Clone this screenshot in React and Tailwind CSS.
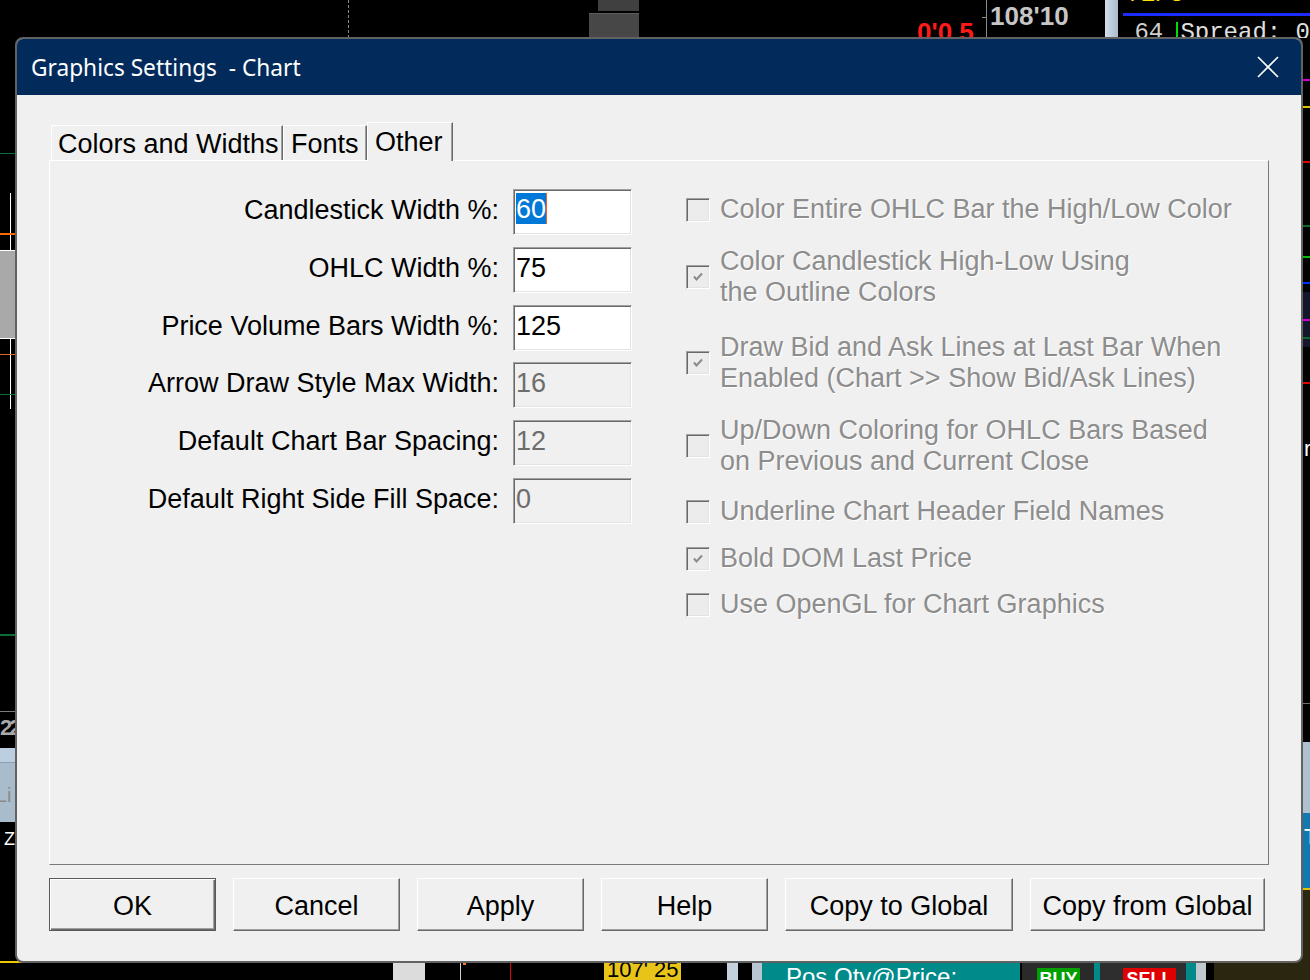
import React from "react";

const rows = [
  { label: "Candlestick Width %:", value: "60", enabled: true, selected: true, mt: "mt-0" },
  { label: "OHLC Width %:", value: "75", enabled: true, mt: "mt-[12px]" },
  { label: "Price Volume Bars Width %:", value: "125", enabled: true, mt: "mt-[12px]" },
  { label: "Arrow Draw Style Max Width:", value: "16", enabled: false, mt: "mt-[11px]" },
  { label: "Default Chart Bar Spacing:", value: "12", enabled: false, mt: "mt-[12px]" },
  { label: "Default Right Side Fill Space:", value: "0", enabled: false, mt: "mt-[12px]" },
];

const checks = [
  { lines: ["Color Entire OHLC Bar the High/Low Color"], checked: false, mt: "mt-0" },
  { lines: ["Color Candlestick High-Low Using", "the Outline Colors"], checked: true, mt: "mt-[21px]" },
  { lines: ["Draw Bid and Ask Lines at Last Bar When", "Enabled (Chart >> Show Bid/Ask Lines)"], checked: true, mt: "mt-[24px]" },
  { lines: ["Up/Down Coloring for OHLC Bars Based", "on Previous and Current Close"], checked: false, mt: "mt-[21px]" },
  { lines: ["Underline Chart Header Field Names"], checked: false, mt: "mt-[19px]" },
  { lines: ["Bold DOM Last Price"], checked: true, mt: "mt-[16px]" },
  { lines: ["Use OpenGL for Chart Graphics"], checked: false, mt: "mt-[15px]" },
];

const buttons = [
  { text: "OK", w: "w-[167px]", def: true },
  { text: "Cancel", w: "w-[167px]" },
  { text: "Apply", w: "w-[167px]" },
  { text: "Help", w: "w-[167px]" },
  { text: "Copy to Global", w: "w-[228px]" },
  { text: "Copy from Global", w: "w-[235px]" },
];

function TopStrip() {
  return (
    <div className="absolute left-0 top-0 w-[1310px] h-[38px] flex items-start overflow-hidden">
      <div className="ml-[348px] h-[38px] border-l border-dashed border-[#8a8a8a]" />
      <div className="ml-[240px] w-[50px] h-[38px] flex flex-col items-end">
        <div className="w-[41px] h-[11px] bg-[#404040]" />
        <div className="mt-[2px] w-[50px] flex-1 bg-[#474747] border-t border-[#5c5c5c]" />
      </div>
      <div className="ml-[278px] mt-[19px] w-[67px] text-[26px] font-bold leading-none text-[#ff1a1a] whitespace-nowrap">0'0.5</div>
      <div className="h-[38px] flex items-start">
        <div className="w-[4px] mt-[17px] h-[1px] bg-[#8a8a8a]" />
        <div className="h-[38px] border-l border-[#8a8a8a]" />
      </div>
      <div className="ml-[3px] mt-[3px] w-[118px] text-[26px] font-bold leading-none text-[#c6c6c6]">108'10</div>
      <div className="w-[14px] h-[38px] bg-gradient-to-r from-[#d3dee9] to-[#a9bccd]" />
      <div className="ml-[5px] flex-1 flex flex-col font-['Liberation_Mono',monospace] text-[24px] leading-none">
        <div className="h-[13px] overflow-hidden pl-[3px]">
          <div className="-mt-[17px] text-[#ffe000]">71/8</div>
        </div>
        <div className="h-[3px] bg-[#1a2cff]" />
        <div className="mt-[5px] flex items-start">
          <div className="ml-[11px] w-[42px] text-[#d0d0d0]">64</div>
          <div className="mt-[1px] w-[2px] h-[18px] bg-[#00e000]" />
          <div className="ml-[2px] text-[#e0e0e0] whitespace-pre">Spread: 0</div>
        </div>
      </div>
    </div>
  );
}

function LeftStrip() {
  return (
    <div className="absolute left-0 top-0 w-[26px] h-[980px] flex flex-col overflow-hidden">
      <div className="h-[153px] shrink-0" />
      <div className="h-[1px] shrink-0 bg-[#0b6e35]" />
      <div className="h-[39px] shrink-0" />
      <div className="h-[40px] shrink-0 w-[11px] border-r border-white" />
      <div className="h-[2px] shrink-0 bg-[#ff6a00]" />
      <div className="h-[15px] shrink-0 w-[11px] border-r border-white" />
      <div className="h-[89px] shrink-0 bg-[#a9a9a9] border-y border-white" />
      <div className="h-[15px] shrink-0 w-[11px] border-r border-white" />
      <div className="h-[1px] shrink-0 bg-[#e06a20]" />
      <div className="h-[39px] shrink-0 w-[11px] border-r border-white" />
      <div className="h-[1px] shrink-0 bg-[#0b6e35]" />
      <div className="h-[14px] shrink-0 w-[11px] border-r border-white" />
      <div className="h-[225px] shrink-0" />
      <div className="h-[2px] shrink-0 bg-[#0b6e35]" />
      <div className="h-[75px] shrink-0" />
      <div className="h-[1px] shrink-0 bg-[#7a7a7a]" />
      <div className="h-[36px] shrink-0 pt-[5px] text-[22px] font-bold leading-none text-[#a8a8a8] tracking-[-3px] whitespace-nowrap">22</div>
      <div className="h-[14px] shrink-0 bg-[#bccfe1]" />
      <div className="h-[1px] shrink-0 bg-[#8aa0b4]" />
      <div className="h-[59px] shrink-0 bg-[#a8bccc] pt-[22px] text-[20px] leading-none text-[#8a8a8a] -indent-[4px] whitespace-nowrap">Li</div>
      <div className="h-[139px] shrink-0 pt-[8px] pl-[4px] text-[18px] leading-none text-white">Z</div>
      <div className="h-[2px] shrink-0 bg-[#f0c800]" />
      <div className="flex-1" />
    </div>
  );
}

function RightStrip() {
  return (
    <div className="absolute right-0 top-0 w-[10px] h-[980px] flex flex-col overflow-hidden text-[22px] leading-none text-white">
      <div className="h-[79px] shrink-0" />
      <div className="h-[2px] shrink-0 bg-[#d000d0]" />
      <div className="h-[25px] shrink-0" />
      <div className="h-[2px] shrink-0 bg-[#e0c000]" />
      <div className="h-[53px] shrink-0" />
      <div className="h-[2px] shrink-0 bg-[#e00000]" />
      <div className="h-[62px] shrink-0" />
      <div className="h-[2px] shrink-0 bg-[#0a6a2a]" />
      <div className="h-[29px] shrink-0" />
      <div className="h-[2px] shrink-0 bg-[#00c000]" />
      <div className="h-[24px] shrink-0" />
      <div className="h-[2px] shrink-0 bg-[#0030ff]" />
      <div className="h-[8px] shrink-0" />
      <div className="h-[27px] shrink-0 bg-[#15152c]" />
      <div className="h-[2px] shrink-0 bg-[#d000d0]" />
      <div className="h-[16px] shrink-0 bg-[#15152c]" />
      <div className="h-[2px] shrink-0 bg-[#0a6a2a]" />
      <div className="h-[8px] shrink-0 bg-[#15152c]" />
      <div className="h-[35px] shrink-0" />
      <div className="h-[2px] shrink-0 bg-[#e00000]" />
      <div className="h-[319px] shrink-0 pt-[54px] pl-[4px]">r</div>
      <div className="h-[1px] shrink-0 bg-[#707070]" />
      <div className="h-[38px] shrink-0" />
      <div className="h-[71px] shrink-0 bg-[#afc0d0]" />
      <div className="h-[75px] shrink-0 bg-[#1279b0] pt-[13px] pl-[4px]">T</div>
      <div className="h-[2px] shrink-0 bg-[#e0c000]" />
      <div className="flex-1 bg-[#2b2610]" />
    </div>
  );
}

function BottomStrip() {
  return (
    <div className="absolute left-0 bottom-0 w-[1310px] h-[25px] flex items-stretch overflow-hidden">
      <div className="w-[393px] shrink-0" />
      <div className="w-[32px] shrink-0 mt-[5px] bg-[#dcdcdc]" />
      <div className="w-[35px] shrink-0" />
      <div className="w-[1px] shrink-0 mt-[5px] bg-[#d0d0d0]" />
      <div className="w-[3px] h-[3px] shrink-0 mt-[7px] ml-[2px] bg-[#ff7a20]" />
      <div className="w-[44px] shrink-0" />
      <div className="w-[1px] shrink-0 mt-[5px] bg-[#e00000]" />
      <div className="w-[93px] shrink-0" />
      <div className="w-[77px] shrink-0 bg-[#e8c418] text-[22px] leading-none text-black pl-[3px] pt-[4px] whitespace-pre">107' 25</div>
      <div className="w-[46px] shrink-0" />
      <div className="w-[11px] shrink-0 mt-[5px] bg-[#c4d0dc]" />
      <div className="w-[14px] shrink-0" />
      <div className="w-[10px] shrink-0 mt-[5px] bg-[#b8c6d4]" />
      <div className="w-[258px] shrink-0 bg-[#008a8a] pl-[24px] pt-[10px] text-[24px] leading-none text-white whitespace-nowrap">Pos Qty@Price:</div>
      <div className="w-[2px] shrink-0" />
      <div className="w-[72px] shrink-0 bg-[#2a2a2a] pl-[15px] pt-[13px]">
        <div className="w-[43px] h-[16px] bg-[#00a000] text-white font-bold text-[18px] leading-[22px] text-center">BUY</div>
      </div>
      <div className="w-[6px] shrink-0 bg-[#008a8a]" />
      <div className="w-[86px] shrink-0 bg-[#2e2e2e] pl-[23px] pt-[13px]">
        <div className="w-[53px] h-[16px] bg-[#e00000] text-white font-bold text-[18px] leading-[22px] text-center">SELL</div>
      </div>
      <div className="w-[10px] shrink-0 bg-[#008a8a]" />
      <div className="w-[10px] shrink-0 bg-[#c0c8d0]" />
      <div className="w-[8px] shrink-0" />
      <div className="flex-1 bg-[#2b2610]" />
    </div>
  );
}

function CheckBox({ checked }) {
  return (
    <div className="w-[24px] h-[24px] shrink-0 border border-t-[#a0a0a0] border-l-[#a0a0a0] border-r-white border-b-white bg-[#ececec] shadow-[inset_1px_1px_0_#696969,inset_-1px_-1px_0_#e3e3e3] flex items-center justify-center">
      {checked && (
        <svg width="12" height="12" viewBox="0 0 12 12">
          <path d="M2 5.5 L4.5 8.5 L10 2.5" fill="none" stroke="#8a8a8a" strokeWidth="2" />
        </svg>
      )}
    </div>
  );
}

export default function App() {
  return (
    <div className="relative w-[1310px] h-[980px] bg-black overflow-hidden font-['Liberation_Sans',Arial,sans-serif]">
      <TopStrip />
      <LeftStrip />
      <RightStrip />
      <BottomStrip />

      <div className="absolute left-[15px] top-[37px] w-[1288px] h-[926px] z-10 rounded-[8px] border-2 border-[#626262] bg-[#f0f0f0] overflow-hidden flex flex-col">
        {/* title bar */}
        <div className="h-[56px] shrink-0 bg-[#022b5c] flex items-center justify-between pl-[14px] pr-[22px]">
          <span className="font-['Noto_Sans',sans-serif] text-[22.7px] leading-[30px] pt-[2px] text-white whitespace-pre">Graphics Settings  - Chart</span>
          <svg width="22" height="22" viewBox="0 0 22 22">
            <path d="M1 1 L21 21 M21 1 L1 21" stroke="white" strokeWidth="1.6" />
          </svg>
        </div>

        {/* body */}
        <div className="flex-1 flex flex-col px-[32px] pt-[27px] text-[27px] text-black">
          {/* tabs */}
          <div className="flex items-end h-[38px] pl-[2px]">
            <div className="w-[232px] h-[35px] border-l border-t border-r border-l-white border-t-white border-r-[#696969] shadow-[inset_-1px_0_0_#a0a0a0] pl-[6px] pt-[3px] leading-[31px] whitespace-nowrap">Colors and Widths</div>
            <div className="w-[84px] h-[35px] border-l border-t border-r border-l-white border-t-white border-r-[#696969] shadow-[inset_-1px_0_0_#a0a0a0] pl-[7px] pt-[3px] leading-[31px] whitespace-nowrap">Fonts</div>
            <div className="relative z-10 w-[86px] h-[39px] -mb-[1px] bg-[#f0f0f0] border-l border-t border-r border-l-white border-t-white border-r-[#696969] shadow-[inset_-1px_0_0_#a0a0a0] pl-[7px] pt-[4px] leading-[31px] whitespace-nowrap">Other</div>
          </div>

          {/* panel */}
          <div className="h-[705px] shrink-0 border border-t-white border-l-white border-r-[#7a7a7a] border-b-[#7a7a7a] flex">
            <div className="w-[582px] shrink-0 pt-[28px] flex flex-col">
              {rows.map((r) => (
                <div key={r.label} className={`flex items-start ${r.mt}`}>
                  <div className="w-[449px] shrink-0 text-right pt-[6px] leading-[31px] whitespace-nowrap">{r.label}</div>
                  <div
                    className={`ml-[14px] w-[119px] h-[46px] shrink-0 border border-t-[#a0a0a0] border-l-[#a0a0a0] border-r-white border-b-white shadow-[inset_1px_1px_0_#696969,inset_-1px_-1px_0_#e3e3e3] pl-[2px] pt-[5px] leading-[31px] ${
                      r.enabled ? "bg-white text-black" : "bg-[#f0f0f0] text-[#6d6d6d]"
                    }`}
                  >
                    {r.selected ? (
                      <span className="inline-block h-[31px] -mt-[2px] pt-[2px] leading-[29px] bg-[#0078d7] text-white border-r border-r-[#f06020] align-top">{r.value}</span>
                    ) : (
                      r.value
                    )}
                  </div>
                </div>
              ))}
            </div>

            <div className="ml-[54px] pt-[33px] flex flex-col">
              {checks.map((c) => (
                <div key={c.lines[0]} className={`flex items-center ${c.mt}`}>
                  <CheckBox checked={c.checked} />
                  <div className="ml-[10px] leading-[31px] text-[#8d8d8d] [text-shadow:1px_1px_0_#ffffff] whitespace-nowrap">
                    {c.lines.map((l) => (
                      <div key={l}>{l}</div>
                    ))}
                  </div>
                </div>
              ))}
            </div>
          </div>

          {/* buttons */}
          <div className="mt-[13px] flex gap-[17px]">
            {buttons.map((b) =>
              b.def ? (
                <button
                  key={b.text}
                  className={`${b.w} h-[53px] pt-[3px] border border-[#5a5a5a] bg-[#f0f0f0] shadow-[inset_1px_1px_0_#ffffff,inset_-1px_-1px_0_#696969,inset_-2px_-2px_0_#a0a0a0] leading-[31px] text-black`}
                >
                  {b.text}
                </button>
              ) : (
                <button
                  key={b.text}
                  className={`${b.w} h-[53px] pt-[3px] border border-t-white border-l-white border-r-[#696969] border-b-[#696969] bg-[#f0f0f0] shadow-[inset_-1px_-1px_0_#a0a0a0] leading-[31px] text-black whitespace-nowrap`}
                >
                  {b.text}
                </button>
              )
            )}
          </div>
        </div>
      </div>
    </div>
  );
}
